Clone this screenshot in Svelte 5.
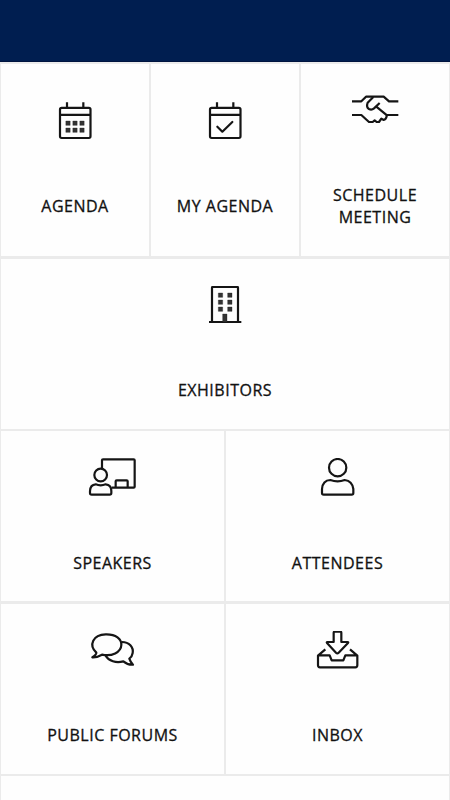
<script>
  const rows = [
    {
      size: "tall",
      tiles: [
        { icon: "agenda", label: "AGENDA", box: "0 36 270 144" },
        { icon: "check", label: "MY AGENDA", box: "0 36 270 144" },
        { icon: "meeting", label: "SCHEDULE MEETING", box: "0 33 270 144" },
      ],
    },
    {
      size: "",
      tiles: [{ icon: "building", label: "EXHIBITORS", box: "0 33 270 144" }],
    },
    {
      size: "spaced",
      tiles: [
        { icon: "speakers", label: "SPEAKERS", box: "-6 33 270 144" },
        { icon: "person", label: "ATTENDEES", box: "3 33 270 144" },
      ],
    },
    {
      size: "",
      tiles: [
        { icon: "forums", label: "PUBLIC FORUMS", box: "-6 33 270 144" },
        { icon: "inbox", label: "INBOX", box: "3 33 270 144" },
      ],
    },
  ];
</script>

<div class="screen">
  <header></header>
  <main>
    {#each rows as row}
      <div class="row {row.size}">
        {#each row.tiles as tile}
          <button class="tile">
            <svg viewBox={tile.box}>
              {#if tile.icon === "agenda" || tile.icon === "check"}
                <rect x="90" y="53.5" width="91.5" height="90.5" rx="5" />
                <path d="M91 74.5H181M111 37V52M160 37V52" />
              {/if}
              {#if tile.icon === "agenda"}
                {#each [93, 114] as y}
                  {#each [107.5, 128.5, 149.5] as x}
                    <rect class="dot" {x} {y} width="13" height="13" />
                  {/each}
                {/each}
              {:else if tile.icon === "check"}
                <path d="M112 110L127 125L157 96" stroke-linecap="round" />
              {:else if tile.icon === "meeting"}
                <path d="M66 64H94L108 50H161L177 64H205" />
                <path d="M66 105H94L117 126H128L134 121L140 126H147L154 116L161 120Q168 119 171 105H205" />
                <path d="M130 51L113 68Q108 82 117 87Q125 91 132 85L149 69M138 79L171 106" />
              {:else if tile.icon === "building"}
                <path d="M96 141V38Q96 36 98 36H172Q174 36 174 38V141M87 141H184" />
                {#each [54, 75, 96] as y}
                  {#each [115, 143] as x}
                    <rect class="dot" {x} {y} width="13" height="13" />
                  {/each}
                {/each}
                <rect class="dot" x="128" y="117" width="13" height="24" />
              {:else if tile.icon === "speakers"}
                <path d="M96 64V40Q96 37 99 37H191Q194 37 194 40V119Q194 122 191 122H125" />
                <circle cx="92" cy="84" r="19" />
                <path d="M65 143Q60 143 60 138V132Q61 113 77 112Q92 118 107 112Q124 113 124 132V138Q124 143 119 143Z" />
                <path d="M137 121V103Q137 100 140 100H170Q173 100 173 103V121" />
              {:else if tile.icon === "person"}
                <circle cx="137" cy="62" r="26" />
                <path d="M95 143Q90 143 90 138V126Q92 100 115 99Q137 107 158 99Q181 102 184 126V138Q184 143 179 143Z" />
              {:else if tile.icon === "forums"}
                <path d="M79 98C55 75 69 44 107 43C138 42 155 58 154 75C153 98 125 110 96 104C87 109 78 113 67 112C76 105 80 102 79 98Z" />
                <path d="M154 66C178 65 191 82 188 99Q186 111 178 116Q181 126 189 134Q173 135 160 124C138 130 116 123 107 107" />
              {:else if tile.icon === "inbox"}
                <path d="M125 66V38Q125 35 128 35H145Q148 35 148 38V66H167Q170 66 168 69L140 98Q136 102 132 98L105 69Q103 66 106 66Z" />
                <path d="M100 88L78 107V136Q78 142 84 142H190Q196 142 196 136V107L174 88M79 106H113L119 121H154L160 106H195" />
              {/if}
            </svg>
            <span>{tile.label}</span>
          </button>
        {/each}
      </div>
    {/each}
    <div class="row next">
      <div class="tile"></div>
    </div>
  </main>
</div>

<style>
  :global(body) {
    background: #ebebeb;
  }

  .screen {
    height: 800px;
    overflow: hidden;
    font-family: "Open Sans", "Noto Sans", sans-serif;
  }

  header {
    box-sizing: border-box;
    height: 62px;
    background: #001e50;
    border-bottom: 1px solid #00143f;
  }

  main {
    padding: 2px 1px 0;
    background: #ebebeb;
  }

  .row {
    display: flex;
    gap: 2px;
    height: 170px;
    margin-bottom: 2px;
  }

  .tall {
    height: 192px;
    margin-bottom: 3px;
  }

  .spaced {
    margin-bottom: 3px;
  }

  .next {
    height: 24px;
    margin-bottom: 0;
  }

  .tile {
    flex: 1 1 0;
    display: flex;
    flex-direction: column;
    align-items: center;
    justify-content: center;
    gap: 45px;
    min-width: 0;
    padding: 0 20px 1px;
    border: none;
    background: #fefefe;
    color: #111;
    font: inherit;
  }

  .spaced .tile {
    gap: 46px;
    padding-bottom: 0;
  }

  svg {
    width: 90px;
    height: 48px;
    flex: none;
    fill: none;
    stroke: #151515;
    stroke-width: 6.6;
    stroke-linejoin: round;
  }

  .dot {
    fill: #333;
    stroke: #222;
    stroke-width: 1;
  }

  span {
    font-size: 16px;
    font-weight: 500;
    line-height: 22px;
    letter-spacing: 0.5px;
    text-align: center;
    -webkit-text-stroke: 0.3px #111;
  }
</style>
